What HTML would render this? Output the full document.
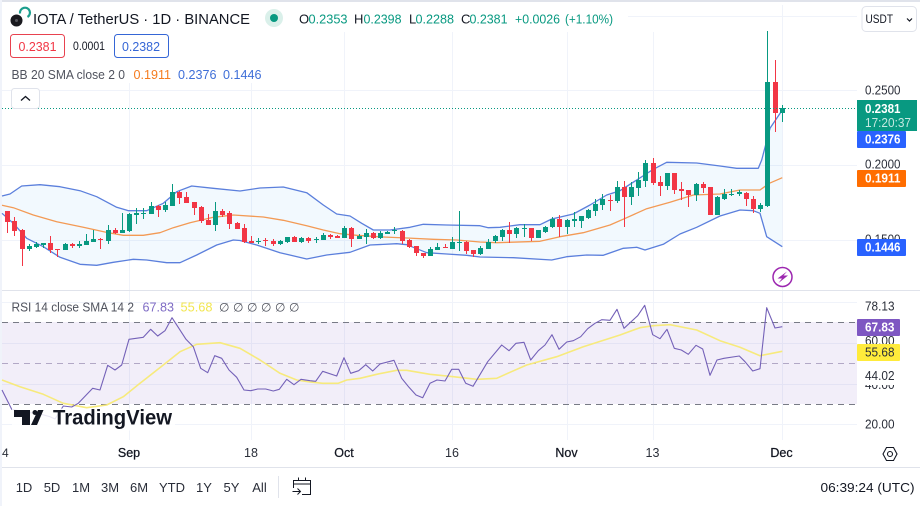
<!DOCTYPE html>
<html><head><meta charset="utf-8"><title>IOTA / TetherUS</title>
<style>
html,body{margin:0;padding:0;background:#fff;width:920px;height:506px;overflow:hidden}
svg{display:block}
text{font-family:"Liberation Sans",sans-serif;font-size:13px;fill:#131722}
.a{font-size:12.5px;fill:#2a2e39}
.g{fill:#089981}
.d{fill:#50535e}
.w{fill:#fff;font-weight:bold}
.t{font-size:12.5px;fill:#2a2e39;text-anchor:middle}
.m{font-size:12.5px;fill:#131722;stroke:#131722;stroke-width:.25px}
</style></head><body>
<svg width="920" height="506" viewBox="0 0 920 506" xmlns="http://www.w3.org/2000/svg">
<rect width="920" height="506" fill="#fff"/>
<rect width="920" height="2" fill="#e0e3eb"/>
<rect y="0" width="2" height="506" fill="#f0f3fa"/>
<!-- grid -->
<g stroke="#f0f3fa" stroke-width="1" fill="none" shape-rendering="crispEdges">
<path d="M2 90.5H857M2 165.5H857M2 240.5H857M628 16.5H857"/>
<path d="M129.5 83V290M251.5 83V290M344.5 32V290M452.5 32V290M567.5 32V290M653.5 32V290M782.5 5V290"/>
<path d="M2 302.5H857M2 343.5H857M2 384.5H857M2 424.5H857"/>
<path d="M129.5 291V440M251.5 291V440M344.5 291V440M452.5 291V440M567.5 291V440M653.5 291V440M782.5 291V440"/>
</g>
<!-- BB fill -->
<polygon fill="#2196f3" fill-opacity=".06" points="2,196 10,194 21.7,186 40,184.7 60,186.7 80,190.7 96.7,196.7 116.7,207.3 128.3,210.7 146.7,210.7 163.3,203.3 176.7,191.7 191.7,186 213.3,188.3 240,191 260,188 283.3,187 306.7,192.7 323.3,205 336.7,214 350,216 361.7,223.3 373.3,230 390,230 410,227.3 423.3,224.3 446.7,225 480,225.7 488.3,227.7 500,227.3 520,224.7 540,224.7 551.7,219 573.3,214 590,205 606.7,195 620,190.7 636.7,180 653.3,169.3 666.7,162.3 696.7,163 720,166 736.7,168.3 758.3,168.3 761.7,160 770,128.3 782.3,110 782.3,246.7 766.7,236.7 760,213.3 753.3,210.7 740,210 720,216 696.7,227.3 680,234 663.3,244.3 645,250 636.7,247.3 623.3,248.3 603.3,255.3 586.7,255 566.7,256.7 551.7,260 513.3,257.7 480,257 466.7,255.3 446.7,254 426.7,252.7 406.7,244.7 396.7,243.7 370,245 350,252.3 326.7,255 306.7,259 280,252.7 256.7,245 240,240.5 233.3,240 216.7,245 196.7,255 180,262.7 166.7,262.7 146.7,260 133.3,259.3 113.3,262.3 96.7,265.3 80,264.3 60,257.3 43.3,246.7 26.7,238.3 13.3,223.3 2,213.3"/>
<!-- BB lines -->
<g fill="none" stroke-linejoin="round" stroke-width="1.3">
<polyline stroke="#5b7fdc" points="2,196 10,194 21.7,186 40,184.7 60,186.7 80,190.7 96.7,196.7 116.7,207.3 128.3,210.7 146.7,210.7 163.3,203.3 176.7,191.7 191.7,186 213.3,188.3 240,191 260,188 283.3,187 306.7,192.7 323.3,205 336.7,214 350,216 361.7,223.3 373.3,230 390,230 410,227.3 423.3,224.3 446.7,225 480,225.7 488.3,227.7 500,227.3 520,224.7 540,224.7 551.7,219 573.3,214 590,205 606.7,195 620,190.7 636.7,180 653.3,169.3 666.7,162.3 696.7,163 720,166 736.7,168.3 758.3,168.3 761.7,160 770,128.3 782.3,110"/>
<polyline stroke="#5b7fdc" points="2,213.3 13.3,223.3 26.7,238.3 43.3,246.7 60,257.3 80,264.3 96.7,265.3 113.3,262.3 133.3,259.3 146.7,260 166.7,262.7 180,262.7 196.7,255 216.7,245 233.3,240 240,240.5 256.7,245 280,252.7 306.7,259 326.7,255 350,252.3 370,245 396.7,243.7 406.7,244.7 426.7,252.7 446.7,254 466.7,255.3 480,257 513.3,257.7 551.7,260 566.7,256.7 586.7,255 603.3,255.3 623.3,248.3 636.7,247.3 645,250 663.3,244.3 680,234 696.7,227.3 720,216 740,210 753.3,210.7 760,213.3 766.7,236.7 782.3,246.7"/>
<polyline stroke="#f39a55" points="2,205.3 13.3,207.7 33.3,215 56.7,221.7 83.3,227.3 108.3,232.7 123.3,235.3 143.3,235.3 160,232.7 173.3,227.7 190,222.7 213.3,217.3 233.3,215 263.3,217 283.3,220.3 306.7,225.7 323.3,230 340,233.7 356.7,235.3 383.3,237 406.7,238 433.3,239.3 456.7,240 480,242 496.7,242.7 540,241.3 560,236.7 583.3,232.7 610,225 626.7,217.7 646.7,208.7 670,202.3 693.3,195 720,194 740,190 760,190 769.3,183.3 782.3,177.7"/>
</g>
<!-- candles green -->
<path fill="#089981" d="M29 244h1v7h-1zM27 246h5v3h-5zM36 242h1v6h-1zM34 244h5v3h-5zM43 243h1v5h-1zM41 243h5v2h-5zM65 243h1v7h-1zM63 244h5v6h-5zM79 241h1v7h-1zM77 244h5v2h-5zM86 234h1v11h-1zM84 241h5v4h-5zM93 230h1v12h-1zM91 239h5v3h-5zM108 225h1v19h-1zM106 230h5v11h-5zM122 213h1v20h-1zM120 230h5v3h-5zM129 213h1v19h-1zM127 214h5v17h-5zM136 208h1v16h-1zM134 213h5v2h-5zM143 208h1v11h-1zM141 213h5v1h-5zM151 202h1v12h-1zM149 206h5v8h-5zM165 202h1v10h-1zM163 205h5v5h-5zM172 184h1v22h-1zM170 192h5v14h-5zM215 202h1v29h-1zM213 211h5v14h-5z
M258 238h1v6h-1zM256 241h5v1h-5zM280 240h1v5h-1zM278 241h5v3h-5zM287 237h1v6h-1zM285 237h5v5h-5zM301 237h1v6h-1zM299 238h5v4h-5zM316 237h1v6h-1zM314 239h5v1h-5zM323 233h1v7h-1zM321 235h5v5h-5zM344 226h1v12h-1zM342 228h5v10h-5zM359 234h1v5h-1zM357 236h5v3h-5zM366 229h1v15h-1zM364 233h5v4h-5zM380 231h1v8h-1zM378 233h5v5h-5zM387 231h1v3h-1zM385 232h5v2h-5zM394 227h1v7h-1zM392 230h5v1h-5zM430 247h1v9h-1zM428 249h5v7h-5zM437 243h1v7h-1zM435 247h5v3h-5zM452 237h1v12h-1zM450 242h5v7h-5zM459 211h1v40h-1zM457 242h5v1h-5z
M480 246h1v9h-1zM478 248h5v6h-5zM488 239h1v10h-1zM486 242h5v7h-5zM495 235h1v8h-1zM493 236h5v5h-5zM502 229h1v12h-1zM500 230h5v7h-5zM516 227h1v11h-1zM514 228h5v6h-5zM524 224h1v13h-1zM522 228h5v1h-5zM538 230h1v8h-1zM536 230h5v8h-5zM545 226h1v7h-1zM543 227h5v5h-5zM552 217h1v11h-1zM550 219h5v8h-5zM567 219h1v15h-1zM565 220h5v7h-5zM574 212h1v15h-1zM572 219h5v2h-5zM581 216h1v12h-1zM579 216h5v5h-5zM588 209h1v10h-1zM586 210h5v8h-5zM595 199h1v17h-1zM593 204h5v7h-5zM602 194h1v16h-1zM600 199h5v6h-5zM617 181h1v22h-1zM615 187h5v14h-5zM631 182h1v23h-1zM629 187h5v10h-5zM638 172h1v24h-1zM636 180h5v8h-5zM645 160h1v27h-1zM643 163h5v18h-5zM667 173h1v17h-1zM665 173h5v13h-5zM696 183h1v18h-1zM694 184h5v11h-5zM717 196h1v19h-1zM715 197h5v18h-5z
M724 189h1v11h-1zM722 194h5v5h-5zM731 189h1v7h-1zM729 194h5v1h-5zM739 190h1v6h-1zM737 192h5v2h-5zM760 203h1v9h-1zM758 205h5v4h-5zM767 31h1v176h-1zM765 82h5v124h-5zM782 105h1v17h-1zM780 108h5v5h-5z"/>
<!-- candles red -->
<path fill="#f23645" d="M7 211h1v22h-1zM5 211h5v11h-5zM14 217h1v19h-1zM12 221h5v10h-5zM22 229h1v37h-1zM20 230h5v19h-5zM50 236h1v17h-1zM48 243h5v7h-5zM57 249h1v8h-1zM55 249h5v1h-5zM72 243h1v5h-1zM70 244h5v2h-5zM100 238h1v11h-1zM98 239h5v1h-5zM115 228h1v6h-1zM113 230h5v3h-5zM158 205h1v12h-1zM156 206h5v4h-5zM179 191h1v13h-1zM177 192h5v6h-5zM186 192h1v11h-1zM184 197h5v6h-5zM194 202h1v13h-1zM192 202h5v6h-5zM201 206h1v17h-1zM199 207h5v14h-5zM208 214h1v11h-1zM206 220h5v5h-5zM222 209h1v8h-1zM220 211h5v4h-5zM229 211h1v18h-1zM227 213h5v11h-5zM237 222h1v7h-1zM235 223h5v6h-5z
M244 224h1v19h-1zM242 228h5v14h-5zM251 236h1v7h-1zM249 241h5v2h-5zM265 238h1v8h-1zM263 240h5v1h-5zM273 239h1v7h-1zM271 241h5v3h-5zM294 236h1v6h-1zM292 237h5v5h-5zM308 237h1v6h-1zM306 238h5v3h-5zM330 234h1v5h-1zM328 235h5v2h-5zM337 235h1v3h-1zM335 236h5v2h-5zM351 227h1v20h-1zM349 228h5v11h-5zM373 232h1v7h-1zM371 233h5v5h-5zM402 230h1v14h-1zM400 231h5v10h-5zM409 239h1v9h-1zM407 240h5v7h-5zM416 246h1v10h-1zM414 246h5v7h-5zM423 253h1v5h-1zM421 253h5v3h-5zM445 244h1v4h-1zM443 247h5v1h-5zM466 241h1v13h-1zM464 242h5v9h-5zM473 250h1v7h-1zM471 250h5v4h-5z
M509 222h1v21h-1zM507 230h5v4h-5zM531 228h1v13h-1zM529 228h5v10h-5zM559 215h1v22h-1zM557 219h5v8h-5zM610 195h1v16h-1zM608 200h5v1h-5zM624 181h1v46h-1zM622 187h5v10h-5zM653 158h1v27h-1zM651 163h5v20h-5zM660 176h1v20h-1zM658 182h5v4h-5zM674 173h1v21h-1zM672 173h5v17h-5zM681 182h1v18h-1zM679 189h5v2h-5zM688 190h1v17h-1zM686 190h5v5h-5zM703 182h1v11h-1zM701 184h5v4h-5zM710 187h1v28h-1zM708 187h5v28h-5zM746 192h1v14h-1zM744 193h5v6h-5zM753 196h1v17h-1zM751 199h5v10h-5zM775 60h1v72h-1zM773 82h5v31h-5z"/>
<!-- price line -->
<path d="M2 108.5H857" stroke="#089981" stroke-width="1" stroke-dasharray="1 2" fill="none"/>
<!-- RSI -->
<rect x="2" y="322" width="855" height="82" fill="#7e57c2" fill-opacity=".1"/>
<g stroke="#787b86" stroke-width="1" stroke-dasharray="6 5" fill="none" shape-rendering="crispEdges">
<path d="M2 322.5H857M2 404.5H857"/>
</g>
<path d="M2 363.5H857" stroke="#b2a8c6" stroke-width="1" stroke-dasharray="6 5" fill="none" shape-rendering="crispEdges"/>
<polyline fill="none" stroke="#f7ea7c" stroke-width="1.6" stroke-linejoin="round" points="2,380 20,386.7 43.3,394.3 63.3,403.3 86.7,407.7 106.7,405 123.3,396.7 140,383.3 163.3,365 180,351.7 196.7,344.3 220,342.7 240,348.3 260,360 280,373.3 296.7,380 310,382 323,383.3 338.3,383.3 346.7,380 360,378.3 376.7,374.3 396.7,370.3 406.7,370.3 430,374.3 453.3,376.7 476.7,379.3 496.7,378.3 510,372.3 526.7,365 556.7,356.7 583.3,346.7 620,335 640,327.7 653.3,325.7 670,324.7 696.7,330 720,340.7 740,347.3 760,355.7 782.3,351.3"/>
<polyline fill="none" stroke="#7461b8" stroke-width="1.1" stroke-linejoin="round" points="2,390 11.7,409.3 25,412 40,414 50,416.7 55,419 63.3,406 71.7,407 78.3,403.3 92.7,388.3 100,390 107.7,365.3 115,370 121.7,365 129,339.3 143.3,337.3 150.7,329.3 157.7,336 165,330.7 172,317.7 186,339.3 193.3,346.7 200.7,368.3 207.7,372.7 214.7,355.7 221.7,358.3 229,370 236.7,377.3 244,390 250.7,390.7 257.7,389 265.7,389 273.3,391 279.3,389.3 286.7,379.3 294,384.7 301,379.3 310,380.7 315.7,381.3 322.7,371.3 336.7,376 344,357.7 350.7,373.3 358.7,370.7 365.7,364.7 372.7,371 380,364 394,360.3 401.7,378.3 409,387.3 416,395 422.7,397.7 430,383.3 437,380 445,381 451.7,369.3 458.7,369.3 465.7,383.3 473,386.3 487.7,361.7 501.7,345 509,350.7 516,343.3 524,342.3 530.7,360 538.3,350.7 545,345 552,334.7 559,349.3 566.7,342 573.3,340.7 580.7,336.7 587.7,328.7 595,323.3 601.7,319.7 610,320.3 617,309.3 624,328.3 637.7,315.7 644.7,305.3 652.7,334.7 660,338.7 667,329.3 674.3,348.3 681.3,350 688.3,354.3 696,345.3 702.7,349 710,375.3 717,360 724,358.3 739.3,356 745,361.7 752.7,371 760,368.7 766.7,307.7 775,328 782.3,326.7"/>
<!-- watermark -->
<rect x="12" y="408.500" width="163" height="22" fill="#fff" fill-opacity=".85"/>
<path d="M14 410H30V425H22V417H14Z M43.5 410L37 425H31L38 410Z" fill="#131722"/>
<circle cx="35" cy="412.500" r="2.500" fill="#131722"/>
<text x="53" y="424.500" textLength="119" lengthAdjust="spacingAndGlyphs" style="font-size:21px;font-weight:bold;fill:#131722">TradingView</text>
<!-- separators -->
<rect x="2" y="290" width="918" height="1" fill="#e0e3eb"/>
<rect x="2" y="467" width="918" height="1" fill="#e0e3eb"/>
<!-- header -->
<circle cx="16.500" cy="20.500" r="6" fill="#1a1a1f"/>
<circle cx="16.500" cy="20.500" r="1.500" fill="#55565c"/>
<path d="M20 13.500A5 5 0 1 1 27.500 17" fill="none" stroke="#1b9e8e" stroke-width="2.200"/>
<text x="33" y="24" textLength="217" lengthAdjust="spacingAndGlyphs" style="font-size:14.500px">IOTA / TetherUS · 1D · BINANCE</text>
<circle cx="274" cy="18" r="9" fill="#daf0ea"/>
<circle cx="274" cy="18" r="4" fill="#089981"/>
<text x="299" y="23.500">O</text><text x="308.500" y="23.500" class="g" textLength="39" lengthAdjust="spacingAndGlyphs">0.2353</text>
<text x="354" y="23.500">H</text><text x="363.500" y="23.500" class="g" textLength="38" lengthAdjust="spacingAndGlyphs">0.2398</text>
<text x="409" y="23.500">L</text><text x="415.500" y="23.500" class="g" textLength="38.500" lengthAdjust="spacingAndGlyphs">0.2288</text>
<text x="461" y="23.500">C</text><text x="469.500" y="23.500" class="g" textLength="38" lengthAdjust="spacingAndGlyphs">0.2381</text>
<text x="515" y="23.500" class="g" textLength="45" lengthAdjust="spacingAndGlyphs">+0.0026</text>
<text x="565" y="23.500" class="g" textLength="48" lengthAdjust="spacingAndGlyphs">(+1.10%)</text>
<!-- bid/ask -->
<rect x="10.500" y="34.500" width="54" height="23" rx="3" fill="#fff" stroke="#e8424f"/>
<text x="18.500" y="51" textLength="38" lengthAdjust="spacingAndGlyphs" style="fill:#f23645">0.2381</text>
<text x="73" y="50" textLength="32" lengthAdjust="spacingAndGlyphs" style="font-size:11.500px">0.0001</text>
<rect x="114.500" y="34.500" width="54" height="23" rx="3" fill="#fff" stroke="#3566d6"/>
<text x="122" y="51" textLength="38" lengthAdjust="spacingAndGlyphs" style="fill:#3566d6">0.2382</text>
<!-- BB legend -->
<text x="11.500" y="79" class="d" textLength="113.500" lengthAdjust="spacingAndGlyphs">BB 20 SMA close 2 0</text>
<text x="133.500" y="79" textLength="37.500" lengthAdjust="spacingAndGlyphs" style="fill:#f57c1f">0.1911</text>
<text x="178" y="79" textLength="38.500" lengthAdjust="spacingAndGlyphs" style="fill:#3f6fd8">0.2376</text>
<text x="223" y="79" textLength="38.500" lengthAdjust="spacingAndGlyphs" style="fill:#3f6fd8">0.1446</text>
<rect x="11.500" y="88.500" width="28" height="20" rx="3" fill="#fff" stroke="#e0e3eb"/>
<path d="M21 100.500l4.500-4 4.500 4" fill="none" stroke="#131722" stroke-width="1.300"/>
<!-- RSI legend -->
<text x="11.500" y="311.500" class="d" textLength="122.500" lengthAdjust="spacingAndGlyphs">RSI 14 close SMA 14 2</text>
<text x="142.500" y="311.500" textLength="31.500" lengthAdjust="spacingAndGlyphs" style="fill:#7e6bc4">67.83</text>
<text x="180.500" y="311.500" textLength="32" lengthAdjust="spacingAndGlyphs" style="fill:#f2e650">55.68</text>
<g>
<text x="219" y="311.500" style="font-size:12px;fill:#50535e">∅</text><text x="233" y="311.500" style="font-size:12px;fill:#50535e">∅</text><text x="247" y="311.500" style="font-size:12px;fill:#50535e">∅</text><text x="261" y="311.500" style="font-size:12px;fill:#50535e">∅</text><text x="275" y="311.500" style="font-size:12px;fill:#50535e">∅</text><text x="289" y="311.500" style="font-size:12px;fill:#50535e">∅</text>
</g>
<!-- lightning -->
<circle cx="782.500" cy="277" r="9.500" fill="#fff" stroke="#9c27b0" stroke-width="1.500"/>
<path d="M787 271.500L777.500 278.500H782L778.500 283L788 275.500H783.500Z" fill="#9c27b0"/>
<!-- axis -->
<rect x="857" y="2" width="63" height="288" fill="#fff"/>
<rect x="857" y="291" width="63" height="176" fill="#fff"/>
<rect x="862" y="6.500" width="54.500" height="25" rx="4" fill="#fff" stroke="#e0e3eb"/>
<text x="865.500" y="23" textLength="27.500" lengthAdjust="spacingAndGlyphs" style="font-size:12px">USDT</text>
<path d="M907 18.500l2.500 2.500 2.500-2.500" fill="none" stroke="#131722" stroke-width="1.200"/>
<text x="865" y="94.500" class="a" textLength="35.500" lengthAdjust="spacingAndGlyphs">0.2500</text>
<text x="865" y="168.500" class="a" textLength="35.500" lengthAdjust="spacingAndGlyphs">0.2000</text>
<text x="865" y="243.500" class="a" textLength="35.500" lengthAdjust="spacingAndGlyphs">0.1500</text>
<rect x="857" y="100" width="60" height="31" fill="#089981"/>
<text x="865" y="113" class="w" textLength="35.500" lengthAdjust="spacingAndGlyphs">0.2381</text>
<text x="865" y="127" textLength="46" lengthAdjust="spacingAndGlyphs" style="fill:#c6e9e1">17:20:37</text>
<rect x="857" y="131" width="49" height="17" rx="1" fill="#2962ff"/>
<text x="865" y="143.500" class="w" textLength="35.500" lengthAdjust="spacingAndGlyphs">0.2376</text>
<rect x="857" y="170" width="49" height="17" rx="1" fill="#ff6d00"/>
<text x="865" y="182.500" class="w" textLength="35.500" lengthAdjust="spacingAndGlyphs">0.1911</text>
<rect x="857" y="239" width="49" height="17" rx="1" fill="#2962ff"/>
<text x="865" y="251.500" class="w" textLength="35.500" lengthAdjust="spacingAndGlyphs">0.1446</text>
<!-- RSI axis -->
<text x="865" y="306.500" class="a" textLength="29.500" lengthAdjust="spacingAndGlyphs">80.00</text>
<rect x="860" y="297.500" width="40" height="17" fill="#fff"/>
<text x="865" y="310.500" class="a" textLength="29.500" lengthAdjust="spacingAndGlyphs">78.13</text>
<text x="865" y="345" class="a" textLength="29.500" lengthAdjust="spacingAndGlyphs">60.00</text>
<text x="865" y="389" class="a" textLength="29.500" lengthAdjust="spacingAndGlyphs">40.00</text>
<rect x="860" y="368" width="40" height="17" fill="#fff"/>
<text x="865" y="380" class="a" textLength="29.500" lengthAdjust="spacingAndGlyphs">44.02</text>
<text x="865" y="428.500" class="a" textLength="29.500" lengthAdjust="spacingAndGlyphs">20.00</text>
<rect x="857" y="319" width="43" height="17" rx="1" fill="#7e57c2"/>
<text x="865" y="331.500" class="w" textLength="29.500" lengthAdjust="spacingAndGlyphs">67.83</text>
<rect x="857" y="344" width="43" height="17" rx="1" fill="#ffeb3b"/>
<text x="865" y="356.500" class="a" textLength="29.500" lengthAdjust="spacingAndGlyphs">55.68</text>
<!-- time axis -->
<rect x="0" y="440" width="2" height="27" fill="#f0f3fa"/>
<text x="2" y="457" class="a" style="font-size:12px">4</text>
<text x="129" y="457" class="t m">Sep</text>
<text x="251" y="457" class="t">18</text>
<text x="344" y="457" class="t m">Oct</text>
<text x="452" y="457" class="t">16</text>
<text x="566.500" y="457" class="t m">Nov</text>
<text x="652.500" y="457" class="t">13</text>
<text x="781.500" y="457" class="t m">Dec</text>
<path d="M883 454L886.500 447.500H893.500L897 454L893.500 460.500H886.500Z" fill="none" stroke="#131722" stroke-width="1.100"/>
<circle cx="890" cy="454" r="2.500" fill="none" stroke="#131722" stroke-width="1.100"/>
<!-- bottom toolbar -->
<g>
<text x="24" y="492" class="t" style="font-size:13px">1D</text>
<text x="52" y="492" class="t" style="font-size:13px">5D</text>
<text x="81" y="492" class="t" style="font-size:13px">1M</text>
<text x="110" y="492" class="t" style="font-size:13px">3M</text>
<text x="139" y="492" class="t" style="font-size:13px">6M</text>
<text x="172" y="492" class="t" style="font-size:13px">YTD</text>
<text x="204" y="492" class="t" style="font-size:13px">1Y</text>
<text x="231.500" y="492" class="t" style="font-size:13px">5Y</text>
<text x="259.500" y="492" class="t" style="font-size:13px">All</text>
</g>
<rect x="278" y="476" width="1" height="22" fill="#e0e3eb"/>
<path d="M293.500 488V480.500H310.500V494.500H302M293.500 484H310.500M298.500 477.500V481M305.500 477.500V481M292.500 491.500H300.500M297.500 488.500L300.500 491.500L297.500 494.500" fill="none" stroke="#131722" stroke-width="1"/>
<text x="820.500" y="492" textLength="94" lengthAdjust="spacingAndGlyphs" style="fill:#131722">06:39:24 (UTC)</text>
</svg>
</body></html>
